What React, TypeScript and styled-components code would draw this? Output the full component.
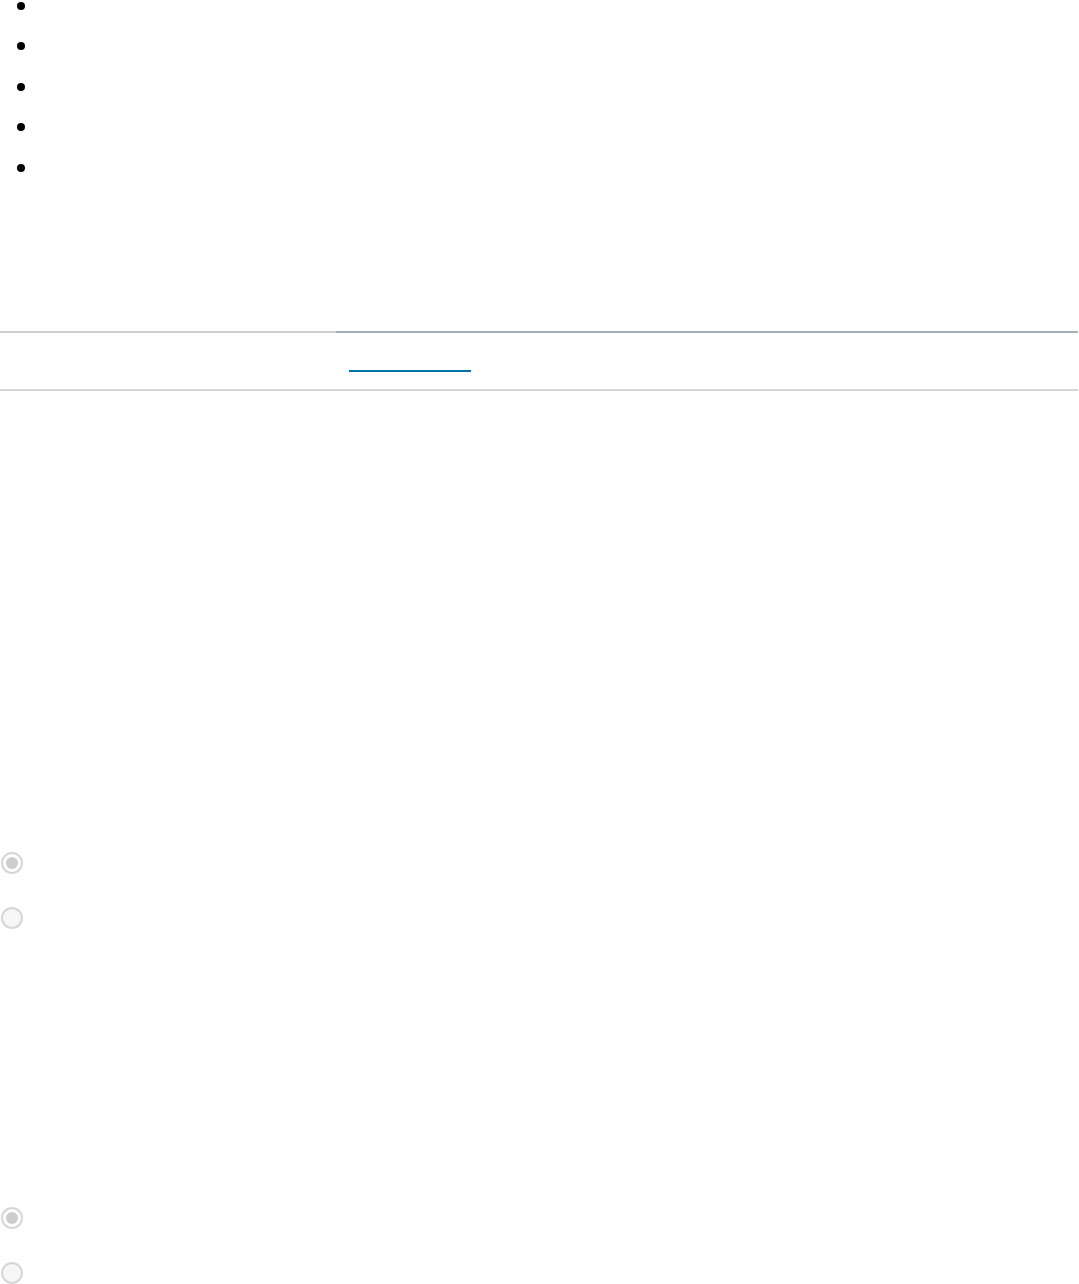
import React from "react";
import styled, { createGlobalStyle } from "styled-components";

const GlobalStyle = createGlobalStyle`
  html, body {
    margin: 0;
    padding: 0;
    background: #fff;
    font-family: "Liberation Sans", Arial, sans-serif;
  }
`;

const Page = styled.div`
  width: 1079px;
  display: flex;
  flex-direction: column;
`;

const List = styled.ul`
  list-style: none;
  margin: 0;
  padding: 1.5px 0 0 16.5px;
  display: flex;
  flex-direction: column;
`;

const Item = styled.li`
  height: 40.5px;
`;

const Disc = styled.span`
  display: block;
  width: 8px;
  height: 8px;
  border-radius: 50%;
  background: #000;
`;

const TabBar = styled.div`
  margin-top: 127px;
  width: 1078px;
  display: grid;
  grid-template-columns: 336px 1fr;
  border-bottom: 2px solid #d3d6da;
`;

const TabCell = styled.div<{ $active?: boolean }>`
  height: 56px;
  border-top: 2px solid ${(p) => (p.$active ? "#a7aeb4" : "#cdd0d4")};
  padding-left: 13px;
  display: flex;
  align-items: flex-start;
`;

const TabLink = styled.a`
  display: block;
  width: 122px;
  margin-top: 37px;
  border-bottom: 2px solid #0073aa;
  height: 0;
`;

const RadioGroup = styled.div<{ $top: number }>`
  margin-top: ${(p) => p.$top}px;
  display: flex;
  flex-direction: column;
  gap: 33px;
  padding-left: 1px;
`;

const Radio = styled.span<{ $checked?: boolean }>`
  display: flex;
  align-items: center;
  justify-content: center;
  box-sizing: border-box;
  width: 22px;
  height: 22px;
  border-radius: 50%;
  border: 2px solid #d6d6d6;
  background: ${(p) => (p.$checked ? "#fff" : "#f6f6f6")};
  &::after {
    content: "";
    display: ${(p) => (p.$checked ? "block" : "none")};
    width: 12px;
    height: 12px;
    border-radius: 50%;
    background: #cdcdcd;
  }
`;

export default function App() {
  return (
    <Page>
      <GlobalStyle />
      <List>
        {[0, 1, 2, 3, 4].map((i) => (
          <Item key={i}>
            <Disc />
          </Item>
        ))}
      </List>
      <TabBar>
        <TabCell />
        <TabCell $active>
          <TabLink />
        </TabCell>
      </TabBar>
      <RadioGroup $top={461}>
        <Radio $checked />
        <Radio />
      </RadioGroup>
      <RadioGroup $top={278}>
        <Radio $checked />
        <Radio />
      </RadioGroup>
    </Page>
  );
}
